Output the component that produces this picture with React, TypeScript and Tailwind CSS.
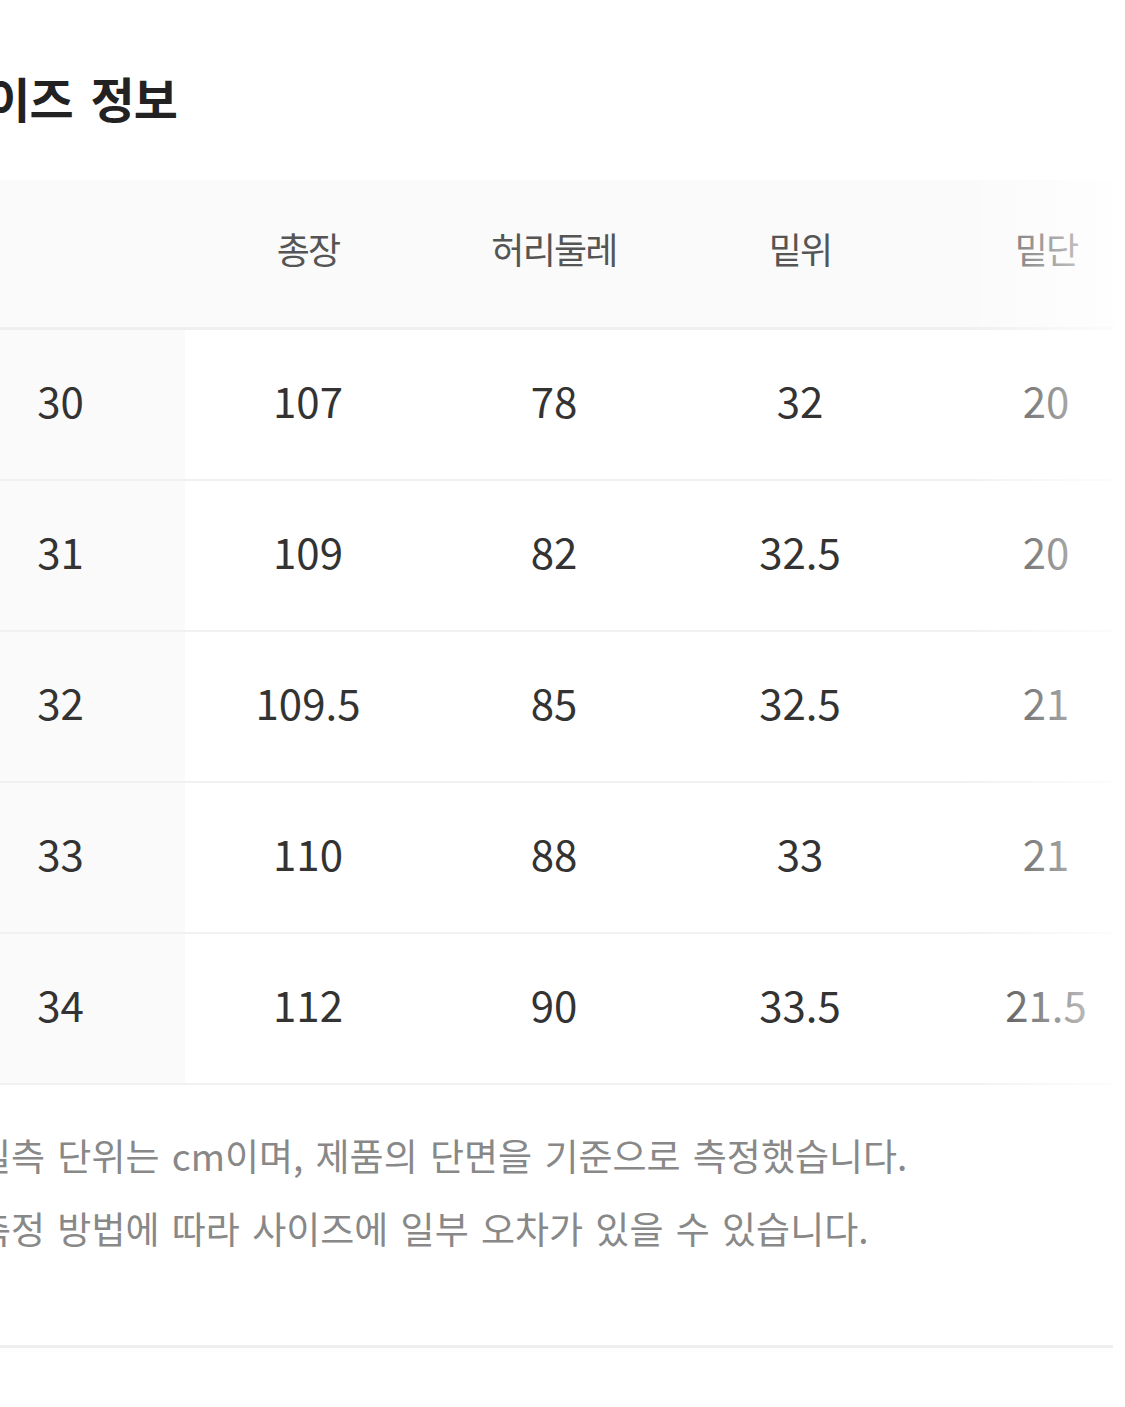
import React from "react";

const headers = ["", "총장", "허리둘레", "밑위", "밑단"];
const rows = [
  ["30", "107", "78", "32", "20"],
  ["31", "109", "82", "32.5", "20"],
  ["32", "109.5", "85", "32.5", "21"],
  ["33", "110", "88", "33", "21"],
  ["34", "112", "90", "33.5", "21.5"],
];

const font = { fontFamily: '"Noto Sans CJK KR", "Noto Sans", sans-serif' };

export default function App() {
  return (
    <div
      className="w-[1125px] h-[1407px] overflow-hidden bg-white"
      style={font}
    >
      <div className="ml-[-64px] mr-[12px] pt-[68px]">
        <h2 className="ml-[7px] text-[48px] leading-[58px] font-bold tracking-[-0.02em] [word-spacing:8px] text-[#222]">
          사이즈 정보
        </h2>

        <div className="relative mt-[54px]">
          <div className="overflow-hidden">
            <div className="w-[1233px]">
              <div className="grid grid-cols-[249px_246px_246px_246px_246px] h-[150px] bg-[#fafafa] border-b-[3px] border-[#efefef]">
                {headers.map((h, i) => (
                  <div
                    key={i}
                    className="flex items-center justify-center pb-[12px] text-[36px] tracking-[-0.05em] text-[#555]"
                  >
                    {h}
                  </div>
                ))}
              </div>
              {rows.map((r, ri) => (
                <div
                  key={ri}
                  className="grid grid-cols-[249px_246px_246px_246px_246px] h-[151px] border-b-2 border-[#f1f1f1]"
                >
                  {r.map((c, ci) => (
                    <div
                      key={ci}
                      className={
                        "flex items-center justify-center pb-[10px] text-[42px] text-[#333] " +
                        (ci === 0 ? "bg-[#fafafa]" : "bg-white")
                      }
                    >
                      {c}
                    </div>
                  ))}
                </div>
              ))}
            </div>
          </div>
          <div className="pointer-events-none absolute right-0 top-0 bottom-0 w-[153px] bg-linear-to-r from-white/0 to-white/80" />
        </div>

        <div className="mt-[34px] pl-[41px] text-[37px] leading-[73px] [word-spacing:4px] text-[#888] whitespace-nowrap">
          <p>실측 단위는 cm이며, 제품의 단면을 기준으로 측정했습니다.</p>
          <p>측정 방법에 따라 사이즈에 일부 오차가 있을 수 있습니다.</p>
        </div>

        <div className="mt-[80px] h-[3px] bg-[#efefef]" />
      </div>
    </div>
  );
}
